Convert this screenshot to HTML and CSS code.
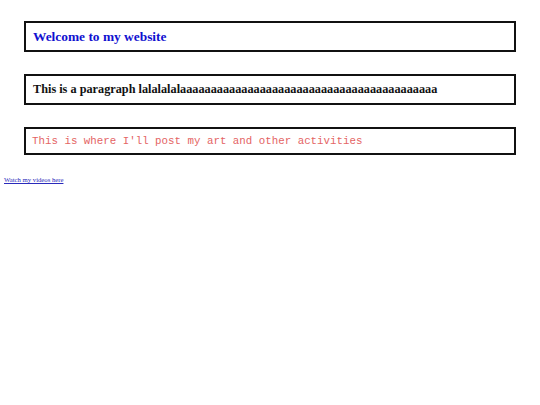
FILE: index.html
```html
<!DOCTYPE html>
<html>
<head>
<meta charset="utf-8">
<link rel="stylesheet" href="styles.css">
</head>
<body>
<div class="page">
  <div class="box box-title"><h1 class="title">Welcome to my website</h1></div>
  <div class="box box-para"><p class="para">This is a paragraph lalalalalaaaaaaaaaaaaaaaaaaaaaaaaaaaaaaaaaaaaaaaaaa</p></div>
  <div class="box box-mono"><p class="mono">This is where I'll post my art and other activities</p></div>
</div>
<a class="link" href="#">Watch my videos here</a>
</body>
</html>
```
FILE: styles.css
```css
html, body {
  margin: 0;
  padding: 0;
  background: #fff;
}
.page {
  display: flex;
  flex-direction: column;
  gap: 22px;
  padding: 21px 24px 0 24px;
}
.box {
  border: 2px solid #111;
  display: flex;
  align-items: center;
  padding: 0 7px;
  box-sizing: border-box;
}
.box-title { height: 31px; }
.box-para { height: 31px; }
.box-mono { height: 28px; }
.title {
  margin: 0;
  font-family: "Liberation Serif", serif;
  font-weight: bold;
  font-size: 13.4px;
  color: #1010d0;
  white-space: nowrap;
}
.para {
  margin: 0;
  font-family: "Liberation Serif", serif;
  font-weight: bold;
  font-size: 12.25px;
  color: #111;
  white-space: nowrap;
}
.mono {
  margin: 0;
  font-family: "Liberation Mono", monospace;
  font-size: 10.8px;
  color: #e46464;
  margin-left: -1px;
}
.link {
  display: block;
  margin: 20px 0 0 4px;
  font-family: "Liberation Serif", serif;
  font-size: 6.7px;
  line-height: 10px;
  color: #2a2abb;
  text-decoration: underline;
  text-decoration-thickness: 1px;
  text-underline-offset: 1px;
}
```
